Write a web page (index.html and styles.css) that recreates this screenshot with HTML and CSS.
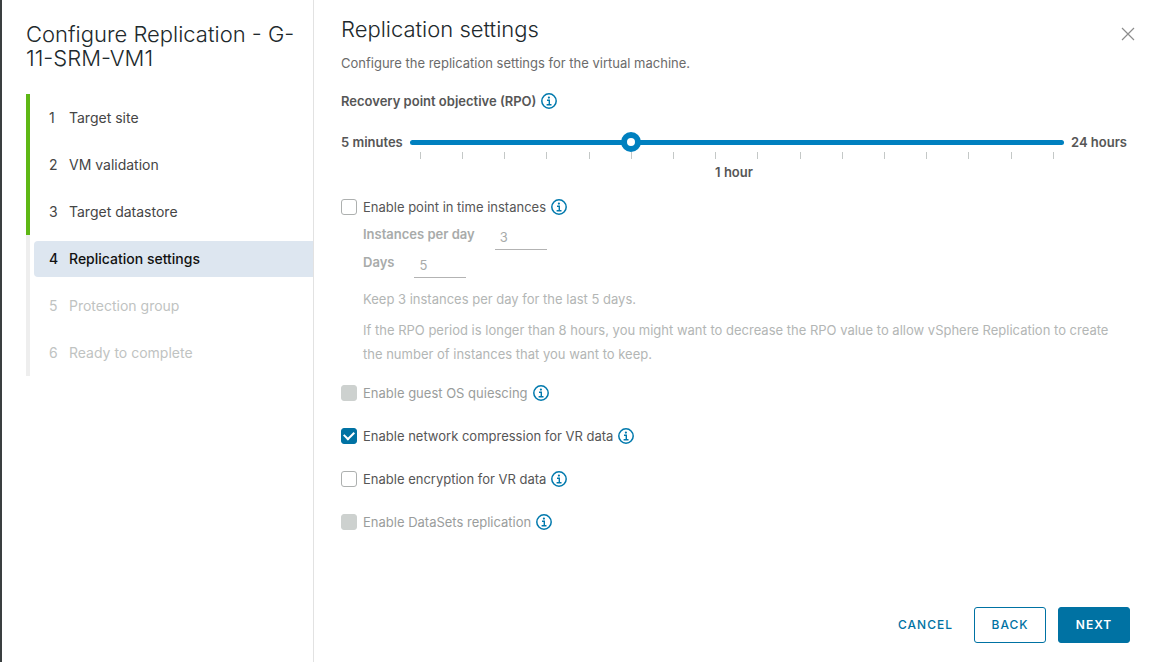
FILE: index.html
```html
<!DOCTYPE html>
<html lang="en">
<head>
  <meta charset="UTF-8">
  <title>Configure Replication</title>
  <meta name="viewport" content="width=device-width,initial-scale=1">
  <link rel="stylesheet" href="styles.css">
</head>
<body>
  <svg class="sprite" aria-hidden="true">
    <symbol id="info" viewBox="0 0 16 16">
      <circle cx="8" cy="8" r="7.2" fill="none" stroke="currentColor" stroke-width="1.5"/>
      <circle cx="7.9" cy="4.6" r="1.1" fill="currentColor"/>
      <path d="M6 7.2h2.3v4.3M5.6 11.7h4.9" fill="none" stroke="currentColor" stroke-width="1.4"/>
    </symbol>
  </svg>
  <div class="wizard">
    <aside class="sidebar">
      <h1>Configure Replication - G-11-SRM-VM1</h1>
      <ol class="steps">
        <li class="step done"><button type="button"><span class="num">1</span>Target site</button></li>
        <li class="step done"><button type="button"><span class="num">2</span>VM validation</button></li>
        <li class="step done"><button type="button"><span class="num">3</span>Target datastore</button></li>
        <li class="step current"><button type="button" aria-current="step"><span class="num">4</span>Replication settings</button></li>
        <li class="step"><button type="button" disabled><span class="num">5</span>Protection group</button></li>
        <li class="step"><button type="button" disabled><span class="num">6</span>Ready to complete</button></li>
      </ol>
    </aside>
    <main class="content">
      <header class="header">
        <h2>Replication settings</h2>
        <button type="button" class="close" aria-label="Close">
          <svg viewBox="0 0 14 14"><path d="M1 1l12 12M13 1L1 13" fill="none" stroke="currentColor" stroke-width="1.2"/></svg>
        </button>
      </header>
      <p class="desc">Configure the replication settings for the virtual machine.</p>

      <div class="row rpo-label">
        <label for="rpo">Recovery point objective (RPO)</label>
        <button type="button" class="info" aria-label="About RPO"><svg><use href="#info"/></svg></button>
      </div>
      <div class="rpo">
        <span>5 minutes</span>
        <div class="slider">
          <input type="range" id="rpo" min="0" max="15" value="5">
          <div class="ticks"><i></i><i></i><i></i><i></i><i></i><i></i><i></i><i></i><i></i><i></i><i></i><i></i><i></i><i></i><i></i><i></i></div>
        </div>
        <span>24 hours</span>
      </div>
      <output class="rpo-value" for="rpo">1 hour</output>

      <div class="row">
        <input type="checkbox" id="pit"><label for="pit">Enable point in time instances</label>
        <button type="button" class="info" aria-label="About point in time instances"><svg><use href="#info"/></svg></button>
      </div>
      <div class="instances">
        <div class="field"><label for="perDay">Instances per day</label><input type="text" id="perDay" value="3" disabled></div>
        <div class="field"><label for="days">Days</label><input type="text" id="days" value="5" disabled></div>
        <p>Keep 3 instances per day for the last 5 days.</p>
        <p>If the RPO period is longer than 8 hours, you might want to decrease the RPO value to allow vSphere Replication to create the number of instances that you want to keep.</p>
      </div>

      <div class="options">
        <div class="row">
          <input type="checkbox" id="quiesce" disabled><label for="quiesce">Enable guest OS quiescing</label>
          <button type="button" class="info" aria-label="About quiescing"><svg><use href="#info"/></svg></button>
        </div>
        <div class="row">
          <input type="checkbox" id="compress" checked><label for="compress">Enable network compression for VR data</label>
          <button type="button" class="info" aria-label="About compression"><svg><use href="#info"/></svg></button>
        </div>
        <div class="row">
          <input type="checkbox" id="encrypt"><label for="encrypt">Enable encryption for VR data</label>
          <button type="button" class="info" aria-label="About encryption"><svg><use href="#info"/></svg></button>
        </div>
        <div class="row">
          <input type="checkbox" id="datasets" disabled><label for="datasets">Enable DataSets replication</label>
          <button type="button" class="info" aria-label="About DataSets"><svg><use href="#info"/></svg></button>
        </div>
      </div>

      <footer class="footer">
        <button type="button" class="btn link">CANCEL</button>
        <button type="button" class="btn outline">BACK</button>
        <button type="button" class="btn primary">NEXT</button>
      </footer>
    </main>
  </div>
</body>
</html>
```
FILE: styles.css
```css
* { box-sizing: border-box; }
body { margin: 0; background: #fff; color: #565656; font: 13px/24px Inter, "Open Sans", sans-serif; }
h1, h2, p, ol { margin: 0; padding: 0; }
button, input { font: inherit; }
button { padding: 0; border: 0; background: none; color: inherit; cursor: pointer; }
svg { display: block; }
.sprite { display: none; }

.wizard { display: flex; min-height: 100vh; border-left: 2px solid #3a3f40; }

/* steps */
.sidebar { flex: 0 0 312px; padding: 22px 0 0 24px; border-right: 1px solid #e2e2e2; }
h1, h2 { font-size: 22px; line-height: 24px; font-weight: 300; color: #21292c; }
h1 { padding-right: 16px; }
.steps { margin-top: 24px; list-style: none; }
.step { height: 47px; padding: 6px 0 5px 4px; border-left: 4px solid #eee; }
.step button { display: flex; align-items: center; width: 100%; height: 36px; padding-left: 15px; border-radius: 4px 0 0 4px; font-size: 14px; color: #454545; }
.step .num { width: 20px; text-align: left; }
.step.done { border-color: #5eb715; }
.step.current button { background: #dde6f0; color: #111; font-weight: 500; }
.step button:disabled { color: #bfc3c2; cursor: default; }

/* content */
.content { flex: 1; min-width: 0; display: flex; flex-direction: column; padding: 17px 21px 19px 27px; }
.header { display: flex; justify-content: space-between; }
.close { width: 14px; height: 14px; margin: 10px -5px 0 0; color: #8c8c8c; }
.close svg { width: 14px; height: 14px; }
.desc { margin-top: 10px; color: #6b6b6b; }

.row { display: flex; align-items: center; height: 24px; }
.info { width: 16px; height: 16px; margin-left: 5px; color: #0079ad; }
.info svg { width: 16px; height: 16px; }
input:disabled + label { color: #9a9d9c; }

.rpo-label { margin-top: 14px; font-weight: 600; }
.rpo { display: flex; gap: 7px; margin: 17px 3px 0 0; font-weight: 600; }
.slider { flex: 1; min-width: 0; }
.ticks { display: flex; justify-content: space-between; padding: 0 10px; }
.ticks i { width: 1px; height: 7px; background: #c4c8c7; }
.rpo-value { height: 24px; margin: 1px 3px 0 0; text-align: center; font-weight: 600; }

input[type="range"] { appearance: none; display: block; width: 100%; height: 20px; margin: 2px 0 0; background: none; }
input[type="range"]::-webkit-slider-runnable-track { height: 5px; border-radius: 3px; background: #0080bf; }
input[type="range"]::-webkit-slider-thumb { appearance: none; width: 20px; height: 20px; margin-top: -8px; border: 6px solid #0080bf; border-radius: 50%; background: #fff; }

input[type="checkbox"] { appearance: none; display: grid; place-content: center; width: 16px; height: 16px; margin: 0 6px 0 0; border: 1px solid #adb0af; border-radius: 3px; background: #fff; }
input[type="checkbox"]:checked { border-color: #0072a3; background: #0072a3; }
input[type="checkbox"]:checked::before { content: ""; width: 8px; height: 5px; margin-bottom: 3px; border: solid #fff; border-width: 0 0 2px 2px; transform: rotate(-45deg); }
input[type="checkbox"]:disabled { border-color: #cdd1cf; background: #cdd1cf; }

.rpo-value + .row { margin-top: 11px; }
.instances { padding: 3px 0 0 22px; color: #b3b6b5; }
.field { display: flex; gap: 20px; height: 28px; }
.field label { font-weight: 600; color: #a8abaa; }
.field input { width: 52px; height: 28px; padding: 2px 5px 0; border: 0; border-bottom: 1px solid #b3b3b3; border-radius: 0; background: none; color: #a8abaa; }
.instances p { margin-top: 7px; }
.field + p { padding-top: 2px; }
.options { display: grid; gap: 19px; margin-top: 15px; }

.footer { display: flex; justify-content: flex-end; gap: 12px; margin-top: auto; padding-top: 24px; }
.btn { height: 36px; padding: 0 15px; border: 1px solid transparent; border-radius: 3px; font-size: 12px; font-weight: 500; letter-spacing: 1px; color: #0072a3; }
.btn.link { padding: 0 8px; }
.btn.outline, .btn.primary { min-width: 72px; border-color: #0072a3; }
.btn.primary { background: #0072a3; color: #fff; font-weight: 600; }
```
